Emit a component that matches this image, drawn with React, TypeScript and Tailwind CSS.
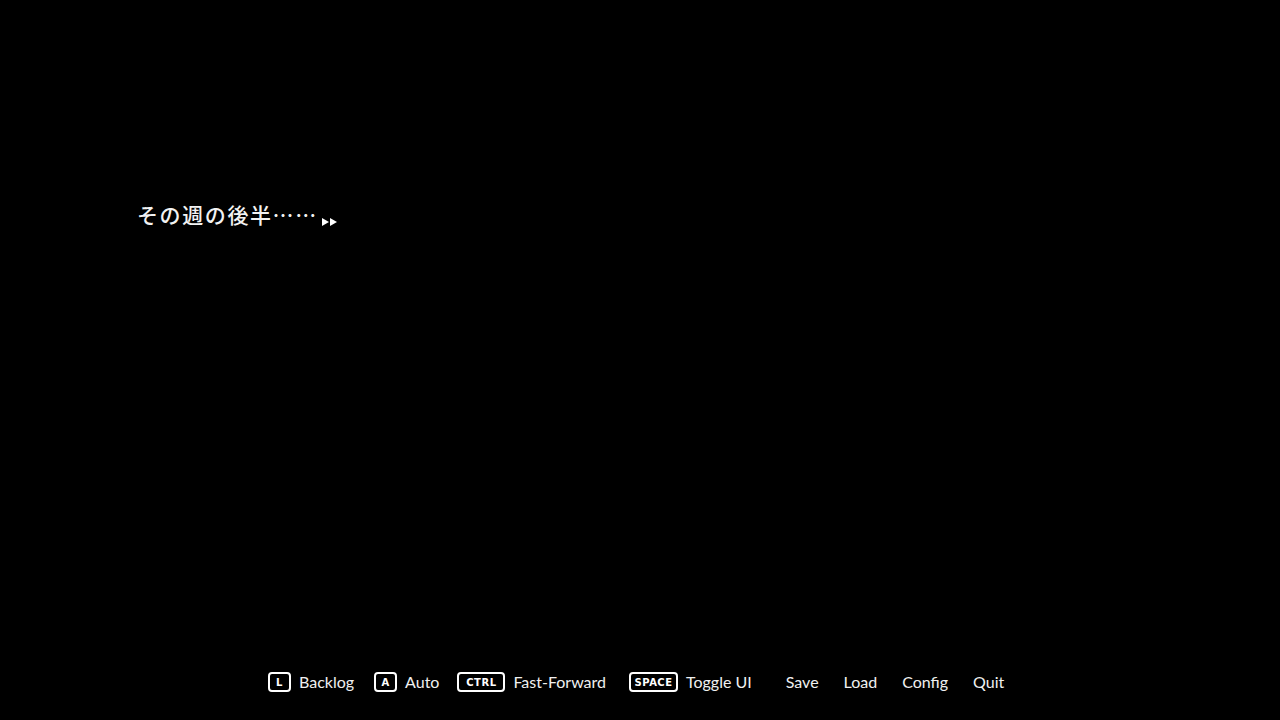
const keyFont = { fontFamily: '"DejaVu Sans", "Liberation Sans", sans-serif' };

function KeyBadge({ label, width }: { label: string; width: string }) {
  return (
    <span
      className={`inline-flex h-[20px] items-center justify-center rounded-[4px] border-2 border-white bg-black pt-[1px] text-[10px] font-bold leading-none tracking-[0.5px] text-white ${width}`}
      style={keyFont}
    >
      {label}
    </span>
  );
}

const actions = [
  { key: 'L', keyWidth: 'w-[23px]', label: 'Backlog', gap: 'mr-[20px]' },
  { key: 'A', keyWidth: 'w-[23px]', label: 'Auto', gap: 'mr-[18px]' },
  { key: 'CTRL', keyWidth: 'w-[48px]', label: 'Fast-Forward', gap: 'mr-[23px]' },
  { key: 'SPACE', keyWidth: 'w-[49px]', label: 'Toggle UI', gap: 'mr-[34px]' },
];

const menu = ['Save', 'Load', 'Config', 'Quit'];

export default function App() {
  return (
    <div
      className="flex h-[720px] w-[1280px] flex-col overflow-hidden bg-black text-white"
      style={{ fontFamily: 'Lato, "Open Sans", sans-serif' }}
    >
      {/* Dialogue */}
      <div className="flex-1 pl-[137px] pt-[200px]">
        <div className="flex items-end">
          <span
            className="text-[21px] font-medium leading-[28px] tracking-[1.6px] text-[#f2f2f2]"
            style={{ fontFamily: '"Noto Sans CJK JP", sans-serif' }}
          >
            その週の後半……
          </span>
          <svg className="mb-[1px] ml-[3px]" width="17" height="10" viewBox="0 0 17 10">
            <path d="M1 1 L8 5 L1 9 Z" fill="white" />
            <path d="M9 1 L16 5 L9 9 Z" fill="white" />
          </svg>
        </div>
      </div>

      {/* Quick menu */}
      <div className="flex h-[56px] items-start pl-[268px] text-[16px] text-[#f0f0f0]">
        <div className="flex h-[36px] items-center">
          {actions.map((a) => (
            <div key={a.key} className={`flex items-center ${a.gap}`}>
              <KeyBadge label={a.key} width={a.keyWidth} />
              <span className="ml-[8px] leading-none">{a.label}</span>
            </div>
          ))}
          {menu.map((m) => (
            <span key={m} className="mr-[25px] leading-none">
              {m}
            </span>
          ))}
        </div>
      </div>
    </div>
  );
}
